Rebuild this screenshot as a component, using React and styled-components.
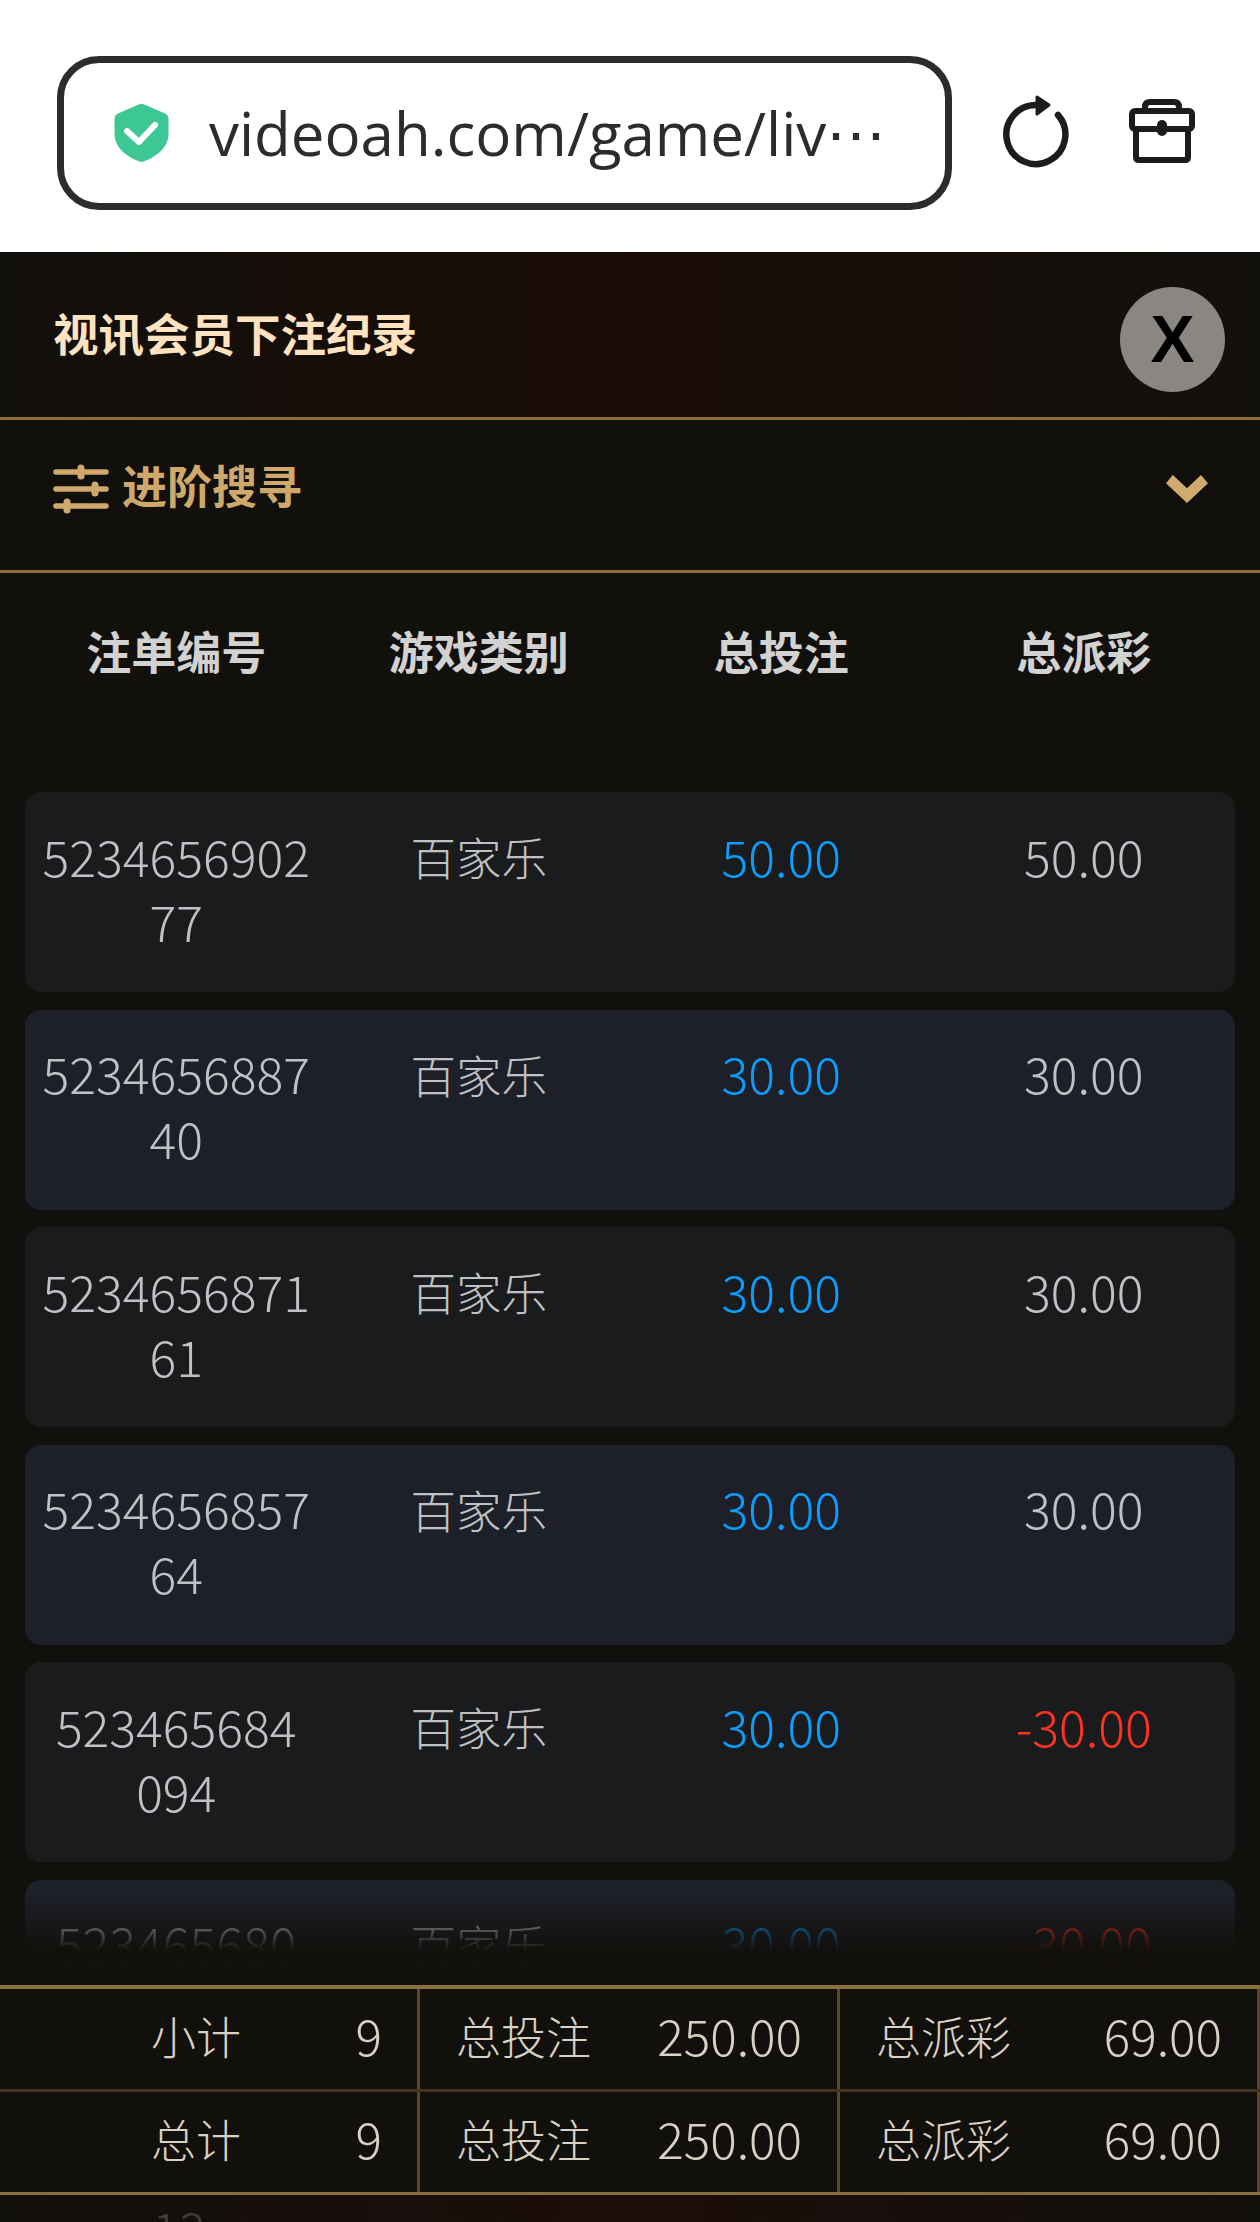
import React from 'react';
import styled, { createGlobalStyle } from 'styled-components';

const GlobalStyle = createGlobalStyle`
  html, body {
    margin: 0;
    padding: 0;
    background: #12100d;
  }
  * {
    box-sizing: border-box;
  }
`;

const FONT = `"Noto Sans CJK SC", "Noto Sans", sans-serif`;

const Page = styled.div`
  width: 1260px;
  height: 2222px;
  overflow: hidden;
  display: flex;
  flex-direction: column;
  font-family: ${FONT};
  background: #12100d;
`;

const BrowserBar = styled.div`
  height: 252px;
  flex: none;
  background: #fff;
  display: flex;
  align-items: center;
  padding: 10px 65px 0 57px;
`;

const UrlBox = styled.div`
  width: 895px;
  height: 154px;
  margin-top: 3px;
  border: 7px solid #2c2c2c;
  border-radius: 42px;
  display: flex;
  align-items: center;
  padding-left: 50px;
  gap: 40px;
`;

const UrlText = styled.span`
  font-family: "Open Sans", "Noto Sans", sans-serif;
  font-size: 60px;
  line-height: 1;
  color: #2c2c2c;
  white-space: nowrap;
`;

const BarIcons = styled.div`
  margin-left: auto;
  display: flex;
  align-items: center;
  gap: 57px;
`;

const TitleBar = styled.div`
  height: 168px;
  flex: none;
  display: flex;
  align-items: center;
  justify-content: space-between;
  padding: 0 35px 0 53px;
  border-bottom: 3px solid #8a6f3e;
  background: linear-gradient(90deg, #12100d 0%, #1a0c05 50%, #12100d 100%);
`;

const Title = styled.h1`
  margin: 0 0 4px;
  font-size: 45.5px;
  font-weight: 700;
  line-height: 1;
  color: #ffe3c1;
`;

const CloseButton = styled.button`
  width: 105px;
  height: 105px;
  margin-top: 9px;
  padding: 0;
  border: 0;
  border-radius: 50%;
  background: #8a8682;
  color: #000;
  font-family: "Liberation Sans", sans-serif;
  font-size: 66px;
  font-weight: 700;
  line-height: 105px;
`;

const SearchBar = styled.div`
  height: 153px;
  flex: none;
  display: flex;
  align-items: center;
  justify-content: space-between;
  padding: 0 52px 12px 53px;
  border-bottom: 3px solid #8a6f3e;
`;

const SearchLabel = styled.div`
  display: flex;
  align-items: center;
  gap: 13px;
  font-size: 45px;
  font-weight: 700;
  line-height: 1;
  color: #cfa96b;
`;

const SearchText = styled.span`
  margin-bottom: 10px;
`;

const HeadRow = styled.div`
  height: 219px;
  flex: none;
  padding: 54px 25px 0;
  display: grid;
  grid-template-columns: repeat(4, 1fr);
  align-items: start;
`;

const HeadCell = styled.div`
  text-align: center;
  font-size: 45px;
  font-weight: 700;
  line-height: 48px;
  color: #d2d2d2;
`;

const ListArea = styled.div`
  position: relative;
  flex: 1;
  min-height: 0;
  overflow: hidden;
  padding: 0 25px;
`;

const Row = styled.div`
  height: 200px;
  margin-bottom: 17.6px;
  padding-top: 32px;
  border-radius: 16px;
  background: ${(p) => (p.$alt ? '#1d2028' : '#1a1b1d')};
  display: grid;
  grid-template-columns: repeat(4, 1fr);
  align-items: start;
`;

const Cell = styled.div`
  margin-top: ${(p) => (p.$num ? '-1.5px' : '0')};
  text-align: center;
  font-size: ${(p) => (p.$num ? '50px' : '45.5px')};
  font-weight: 300;
  line-height: 65px;
  color: ${(p) => p.$color || '#bfc1c5'};
`;

const ListFade = styled.div`
  position: absolute;
  left: 0;
  right: 0;
  bottom: 0;
  height: 90px;
  background: linear-gradient(180deg, rgba(18, 16, 13, 0) 0%, rgba(18, 16, 13, 0.96) 60%, #12100d 64%, rgba(18, 16, 13, 0.96) 100%);
`;

const Totals = styled.div`
  flex: none;
  border-top: 4px solid #8a6f3e;
  border-bottom: 3px solid #8a6f3e;
`;

const TotalsRow = styled.div`
  height: 100px;
  display: grid;
  grid-template-columns: repeat(3, 420px);
  & + & {
    height: 103px;
    border-top: 3px solid #43351f;
  }
`;

const TotalsCell = styled.div`
  display: flex;
  align-items: center;
  justify-content: space-between;
  padding: 0 35px 7px ${(p) => p.$indent}px;
  border-right: 3px solid #5a4629;
  font-size: 45px;
  font-weight: 300;
  color: #d9d1c3;
`;

const TotalsValue = styled.span`
  margin-bottom: 2px;
  font-size: 49.5px;
`;

const BottomStrip = styled.div`
  height: 27px;
  flex: none;
  overflow: hidden;
  padding-left: 152px;
  font-size: 50px;
  font-weight: 300;
  line-height: 65px;
  color: #3f3b38;
  background: linear-gradient(90deg, #12100d 0%, #1c0d09 50%, #12100d 100%);
`;

const ShieldIcon = () => (
  <svg width="55" height="58" viewBox="0 0 55 58">
    <path fill="#3dc795" d="M27.5 0Q29.5 0 31.5 1L51 9.5Q54.5 11 54.5 15V30C54.5 44 41 54 27.5 58C14 54 .5 44 .5 30V15Q.5 11 4 9.5L23.5 1Q25.5 0 27.5 0Z" />
    <path fill="none" stroke="#fff" strokeWidth="6" strokeLinecap="round" strokeLinejoin="round" d="M13 27L25 38L41 21" />
  </svg>
);

const ReloadIcon = () => (
  <svg width="72" height="76" viewBox="0 0 72 76">
    <path fill="none" stroke="#1c1c1c" strokeWidth="6.5" strokeLinecap="round" d="M58 22A29.5 29.5 0 1 1 36 12" />
    <path fill="#1c1c1c" stroke="#1c1c1c" strokeWidth="3" strokeLinejoin="round" d="M37 4L49 12L37 21Z" />
  </svg>
);

const CaseIcon = () => (
  <svg width="66" height="64" viewBox="0 0 66 64">
    <g fill="none" stroke="#1c1c1c" strokeWidth="6" strokeLinejoin="round">
      <rect x="3" y="12" width="60" height="18" rx="3" />
      <path d="M7 30V58Q7 61 10 61H56Q59 61 59 58V30" />
      <path d="M16 12V8Q16 3 21 3H45Q50 3 50 8V12" />
    </g>
    <rect x="28" y="21" width="10" height="16" rx="5" fill="#1c1c1c" />
  </svg>
);

const SlidersIcon = () => (
  <svg width="56" height="50" viewBox="0 0 56 50">
    <g stroke="#cfa96b" strokeWidth="5.5" strokeLinecap="round">
      <path d="M3 8H53M3 25H53M3 42H53" />
      <path strokeWidth="7" d="M28 4V12M42 21V29M14 38V46" />
    </g>
  </svg>
);

const ChevronIcon = () => (
  <svg width="42" height="28" viewBox="0 0 42 28">
    <path fill="#d1ab6d" d="M0 8.3L6.8 0L21 13.3L35 0L42 8.3L21 28Z" />
  </svg>
);

const heads = ['注单编号', '游戏类别', '总投注', '总派彩'];

const rows = [
  { id: ['5234656902', '77'], bet: '50.00', payout: '50.00' },
  { id: ['5234656887', '40'], bet: '30.00', payout: '30.00' },
  { id: ['5234656871', '61'], bet: '30.00', payout: '30.00' },
  { id: ['5234656857', '64'], bet: '30.00', payout: '30.00' },
  { id: ['523465684', '094'], bet: '30.00', payout: '-30.00' },
  { id: ['523465680'], bet: '30.00', payout: '-30.00' },
];

const totals = [
  { label: '小计', count: '9' },
  { label: '总计', count: '9' },
];

export default function App() {
  return (
    <Page>
      <GlobalStyle />
      <BrowserBar>
        <UrlBox>
          <ShieldIcon />
          <UrlText>videoah.com/game/liv⋯</UrlText>
        </UrlBox>
        <BarIcons>
          <ReloadIcon />
          <CaseIcon />
        </BarIcons>
      </BrowserBar>

      <TitleBar>
        <Title>视讯会员下注纪录</Title>
        <CloseButton>X</CloseButton>
      </TitleBar>

      <SearchBar>
        <SearchLabel>
          <SlidersIcon />
          <SearchText>进阶搜寻</SearchText>
        </SearchLabel>
        <ChevronIcon />
      </SearchBar>

      <HeadRow>
        {heads.map((h) => (
          <HeadCell key={h}>{h}</HeadCell>
        ))}
      </HeadRow>

      <ListArea>
        {rows.map((r, i) => (
          <Row key={r.id[0]} $alt={i % 2 === 1}>
            <Cell $num>
              {r.id[0]}
              {r.id[1] && <br />}
              {r.id[1]}
            </Cell>
            <Cell>百家乐</Cell>
            <Cell $num $color="#0a9fff">{r.bet}</Cell>
            <Cell $num $color={r.payout.startsWith('-') ? '#ff3222' : undefined}>{r.payout}</Cell>
          </Row>
        ))}
        <ListFade />
      </ListArea>

      <Totals>
        {totals.map((t) => (
          <TotalsRow key={t.label}>
            <TotalsCell $indent={151}>
              <span>{t.label}</span>
              <TotalsValue>{t.count}</TotalsValue>
            </TotalsCell>
            <TotalsCell $indent={36}>
              <span>总投注</span>
              <TotalsValue>250.00</TotalsValue>
            </TotalsCell>
            <TotalsCell $indent={36}>
              <span>总派彩</span>
              <TotalsValue>69.00</TotalsValue>
            </TotalsCell>
          </TotalsRow>
        ))}
      </Totals>

      <BottomStrip>13</BottomStrip>
    </Page>
  );
}
